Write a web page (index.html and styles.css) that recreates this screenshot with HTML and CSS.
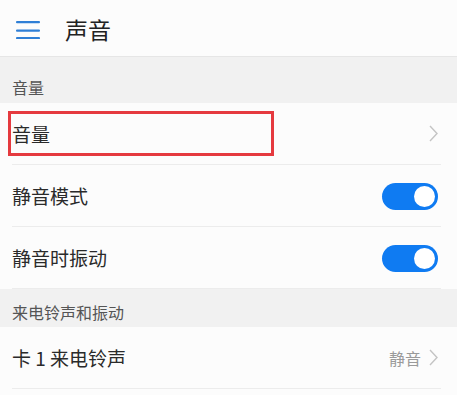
FILE: index.html
```html
<!DOCTYPE html>
<html lang="zh-CN">
<head>
<meta charset="utf-8">
<link rel="stylesheet" href="styles.css">
</head>
<body>
<div class="header">
  <svg class="menu" width="24" height="20" viewBox="0 0 24 20">
    <rect x="0" y="2" width="24" height="2.2" rx="1" fill="#2f7fd6"/>
    <rect x="0" y="10.5" width="24" height="2.2" rx="1" fill="#2f7fd6"/>
    <rect x="0" y="18" width="24" height="2.2" rx="1" fill="#2f7fd6"/>
  </svg>
  <div class="title">声音</div>
</div>
<div class="section s1">音量</div>
<div class="row">
  <div class="inner">
    <span class="label">音量</span>
    <span class="chev"><svg width="9" height="17" viewBox="0 0 9 17"><path d="M1 1 L8 8.5 L1 16" fill="none" stroke="#c4c4c4" stroke-width="1.4"/></svg></span>
  </div>
  <div class="mark"></div>
</div>
<div class="row">
  <div class="inner">
    <span class="label">静音模式</span>
    <span class="toggle"><span class="knob"></span></span>
  </div>
</div>
<div class="row">
  <div class="inner">
    <span class="label">静音时振动</span>
    <span class="toggle"><span class="knob"></span></span>
  </div>
</div>
<div class="section s2">来电铃声和振动</div>
<div class="row">
  <div class="inner">
    <span class="label">卡 1 来电铃声</span>
    <span class="right"><span class="value">静音</span><svg width="9" height="17" viewBox="0 0 9 17"><path d="M1 1 L8 8.5 L1 16" fill="none" stroke="#c4c4c4" stroke-width="1.4"/></svg></span>
  </div>
</div>
</body>
</html>
```
FILE: styles.css
```css
* { box-sizing: border-box; }
html, body { margin: 0; padding: 0; }
body {
  width: 457px;
  height: 395px;
  overflow: hidden;
  background: #fcfcfc;
  font-family: "Noto Sans CJK SC", "Noto Sans", sans-serif;
  color: #2a2a2a;
}
.header {
  height: 57px;
  background: #fcfcfc;
  display: flex;
  align-items: center;
  border-bottom: 1px solid #e6e6e6;
}
.menu { margin-left: 16px; margin-top: 1px; }
.title {
  margin-left: 25px;
  font-size: 23px;
  line-height: 30px;
  color: #222;
  margin-top: 2px;
}
.section {
  background: #f1f1f1;
  font-size: 16px;
  line-height: 18px;
  color: #555;
  padding-left: 12px;
  display: flex;
  align-items: flex-end;
  padding-bottom: 7px;
}
.s1 { height: 46px; }
.s2 { height: 38px; padding-bottom: 6px; }
.row {
  position: relative;
  background: #fcfcfc;
}
.inner {
  height: 62px;
  margin-left: 12px;
  margin-right: 16px;
  border-bottom: 1px solid #ececec;
  display: flex;
  align-items: center;
  justify-content: space-between;
  padding-right: 3px;
}
.label {
  font-size: 19px;
  line-height: 24px;
  color: #2a2a2a;
  margin-top: 1px;
}
.chev { display: flex; margin-right: 0; }
.right { display: flex; align-items: center; gap: 8px; }
.value { font-size: 16px; color: #9a9a9a; line-height: 20px; }
.toggle {
  width: 56px;
  height: 27px;
  border-radius: 14px;
  background: #0f7bf2;
  position: relative;
  margin-top: 1px;
}
.knob {
  position: absolute;
  right: 3px;
  top: 3px;
  width: 21px;
  height: 21px;
  border-radius: 50%;
  background: #fff;
}
.mark {
  position: absolute;
  left: 8px;
  top: 8px;
  width: 266px;
  height: 45px;
  border: 3px solid #e53a3f;
}
```
